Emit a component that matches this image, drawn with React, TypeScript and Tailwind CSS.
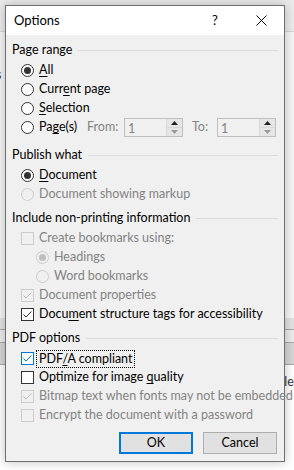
import React from "react";

type Kind = "radio" | "check";

type Item = {
  kind: Kind;
  label: React.ReactNode;
  checked?: boolean;
  disabled?: boolean;
  indent?: boolean;
  focus?: boolean;
};

const u = (s: string) => <span className="underline underline-offset-2">{s}</span>;

const pageRange: Item[] = [
  { kind: "radio", label: <>{u("A")}ll</>, checked: true },
  { kind: "radio", label: <>Curr{u("e")}nt page</> },
  { kind: "radio", label: <>{u("S")}election</> },
];

const publish: Item[] = [
  { kind: "radio", label: <>{u("D")}ocument</>, checked: true },
  { kind: "radio", label: "Document showing markup", disabled: true },
];

const nonPrinting: Item[] = [
  { kind: "check", label: "Create bookmarks using:", disabled: true },
  { kind: "radio", label: "Headings", disabled: true, checked: true, indent: true },
  { kind: "radio", label: "Word bookmarks", disabled: true, indent: true },
  { kind: "check", label: "Document properties", disabled: true, checked: true },
  { kind: "check", label: <>Docu{u("m")}ent structure tags for accessibility</>, checked: true },
];

const pdfOptions: Item[] = [
  { kind: "check", label: <>PDF{u("/")}A compliant</>, checked: true, focus: true },
  { kind: "check", label: <>Optimize for image {u("q")}uality</> },
  { kind: "check", label: "Bitmap text when fonts may not be embedded", disabled: true, checked: true },
  { kind: "check", label: "Encrypt the document with a password", disabled: true },
];

function Radio({ checked, disabled }: { checked?: boolean; disabled?: boolean }) {
  return (
    <span
      className={`flex items-center justify-center w-[13px] h-[13px] shrink-0 rounded-full border ${
        disabled ? "border-[#cccccc] bg-[#f0f0f0]" : "border-[#333333] bg-white"
      }`}
    >
      {checked && (
        <span className={`w-[7px] h-[7px] rounded-full ${disabled ? "bg-[#bfbfbf]" : "bg-[#333333]"}`} />
      )}
    </span>
  );
}

function Check({ checked, disabled, focus }: { checked?: boolean; disabled?: boolean; focus?: boolean }) {
  const border = focus ? "border-[#0078d7]" : disabled ? "border-[#cccccc]" : "border-[#333333]";
  const stroke = focus ? "#0078d7" : disabled ? "#bfbfbf" : "#333333";
  return (
    <span
      className={`flex items-center justify-center w-[13px] h-[13px] shrink-0 border ${border} ${
        disabled ? "bg-[#f0f0f0]" : "bg-white"
      }`}
    >
      {checked && (
        <svg width="11" height="11" viewBox="0 0 11 11">
          <path d="M1.5 5.5 L4 8 L9.5 2.5" fill="none" stroke={stroke} strokeWidth="1" />
        </svg>
      )}
    </span>
  );
}

function Row({ item }: { item: Item }) {
  return (
    <div className={`flex h-[19px] items-center gap-[5px] ${item.indent ? "pl-[24px]" : "pl-[9px]"}`}>
      {item.kind === "radio" ? (
        <Radio checked={item.checked} disabled={item.disabled} />
      ) : (
        <Check checked={item.checked} disabled={item.disabled} focus={item.focus} />
      )}
      <span
        className={`whitespace-nowrap ${item.disabled ? "text-[#838383]" : "text-black"} ${
          item.focus ? "outline outline-1 outline-dotted outline-black -ml-[2px] px-[2px] leading-[16px]" : ""
        }`}
      >
        {item.label}
      </span>
    </div>
  );
}

function Header({ title, className = "" }: { title: string; className?: string }) {
  return (
    <div className={`flex h-[20px] items-center gap-[6px] pr-[6px] ${className}`}>
      <span className="whitespace-nowrap text-black">{title}</span>
      <span className="h-px flex-1 bg-[#dcdcdc]" />
    </div>
  );
}

function Spin() {
  return (
    <div className="flex h-[19px] w-[59px] border border-[#bfbfbf] bg-[#f0f0f0]">
      <span className="flex-1 pl-[3px] pt-[1px] text-[#838383] leading-[17px]">1</span>
      <div className="flex w-[16px] flex-col border-l border-[#d9d9d9]">
        <span className="flex flex-1 items-center justify-center border-b border-[#d9d9d9] bg-[#e6e6e6]">
          <svg width="7" height="4" viewBox="0 0 7 4">
            <path d="M0 4 L3.5 0 L7 4 Z" fill="#222" />
          </svg>
        </span>
        <span className="flex flex-1 items-center justify-center bg-[#e6e6e6]">
          <svg width="7" height="4" viewBox="0 0 7 4">
            <path d="M0 0 L3.5 4 L7 0 Z" fill="#9a9a9a" />
          </svg>
        </span>
      </div>
    </div>
  );
}

export default function App() {
  return (
    <div
      className="relative h-[470px] w-[294px] overflow-hidden bg-white text-[12.5px]"
      style={{ fontFamily: 'Lato, "Noto Sans", Arial, sans-serif' }}
    >
      {/* word window behind the dialog */}
      <div className="flex h-full flex-col">
        <div className="h-[32px] border-b border-[#d4d4d4] bg-[#ebebeb]" />
        <div className="flex h-[286px] bg-[#f6f6f6] pt-[34px] text-[#333]">
          <span className="-ml-[4px]">s</span>
        </div>
        <div className="h-[12px] border-b border-[#a8a8a8] bg-[#e2e2e2]" />
        <div className="h-[13px] border-b border-[#a8a8a8] bg-[#ececec]" />
        <div className="h-[22px] border-b border-[#a8a8a8] bg-[#d6d6d6]" />
        <div className="flex justify-end pt-[8px] text-[#333]">
          <span className="-mr-[3px]">le:</span>
        </div>
      </div>

      {/* dialog */}
      <div className="absolute left-[5px] top-[5px] flex h-[457px] w-[280px] flex-col border border-[#6f6f6f] bg-[#f0f0f0] shadow-[0_0_10px_rgba(0,0,0,0.25)]">
        <div className="flex h-[29px] items-center bg-white pl-[8px]">
          <span className="flex-1 text-[13px] text-black">Options</span>
          <span className="w-[20px] text-[13px] text-black">?</span>
          <span className="flex w-[52px] justify-start pl-[24px]">
            <svg width="11" height="11" viewBox="0 0 11 11">
              <path d="M0.5 0.5 L10.5 10.5 M10.5 0.5 L0.5 10.5" stroke="#000" strokeWidth="1" />
            </svg>
          </span>
        </div>

        <div className="flex flex-1 flex-col pl-[6px] pt-[5px]">
          <Header title="Page range" />
          <div className="mt-px">
            {pageRange.map((it, i) => (
              <Row key={i} item={it} />
            ))}
            <div className="flex h-[19px] items-center pl-[9px]">
              <Radio />
              <span className="ml-[5px] w-[48px] whitespace-nowrap">Pa{u("g")}e(s)</span>
              <span className="w-[37px] text-[#838383]">From:</span>
              <Spin />
              <span className="w-[34px] pl-[9px] text-[#838383]">To:</span>
              <Spin />
            </div>
          </div>

          <Header title="Publish what" className="mt-[8px]" />
          <div className="mt-px">
            {publish.map((it, i) => (
              <Row key={i} item={it} />
            ))}
          </div>

          <Header title="Include non-printing information" className="mt-[4px]" />
          <div className="mt-px">
            {nonPrinting.map((it, i) => (
              <Row key={i} item={it} />
            ))}
          </div>

          <Header title="PDF options" className="mt-[4px]" />
          <div className="mt-px">
            {pdfOptions.map((it, i) => (
              <Row key={i} item={it} />
            ))}
          </div>

          <div className="mt-[7px] flex justify-end gap-[10px] pr-[7px]">
            <button className="h-[22px] w-[74px] border-2 border-[#0078d7] bg-[#e1e1e1] text-black">OK</button>
            <button className="h-[22px] w-[74px] border border-[#adadad] bg-[#e1e1e1] text-black">Cancel</button>
          </div>
        </div>
      </div>
    </div>
  );
}
